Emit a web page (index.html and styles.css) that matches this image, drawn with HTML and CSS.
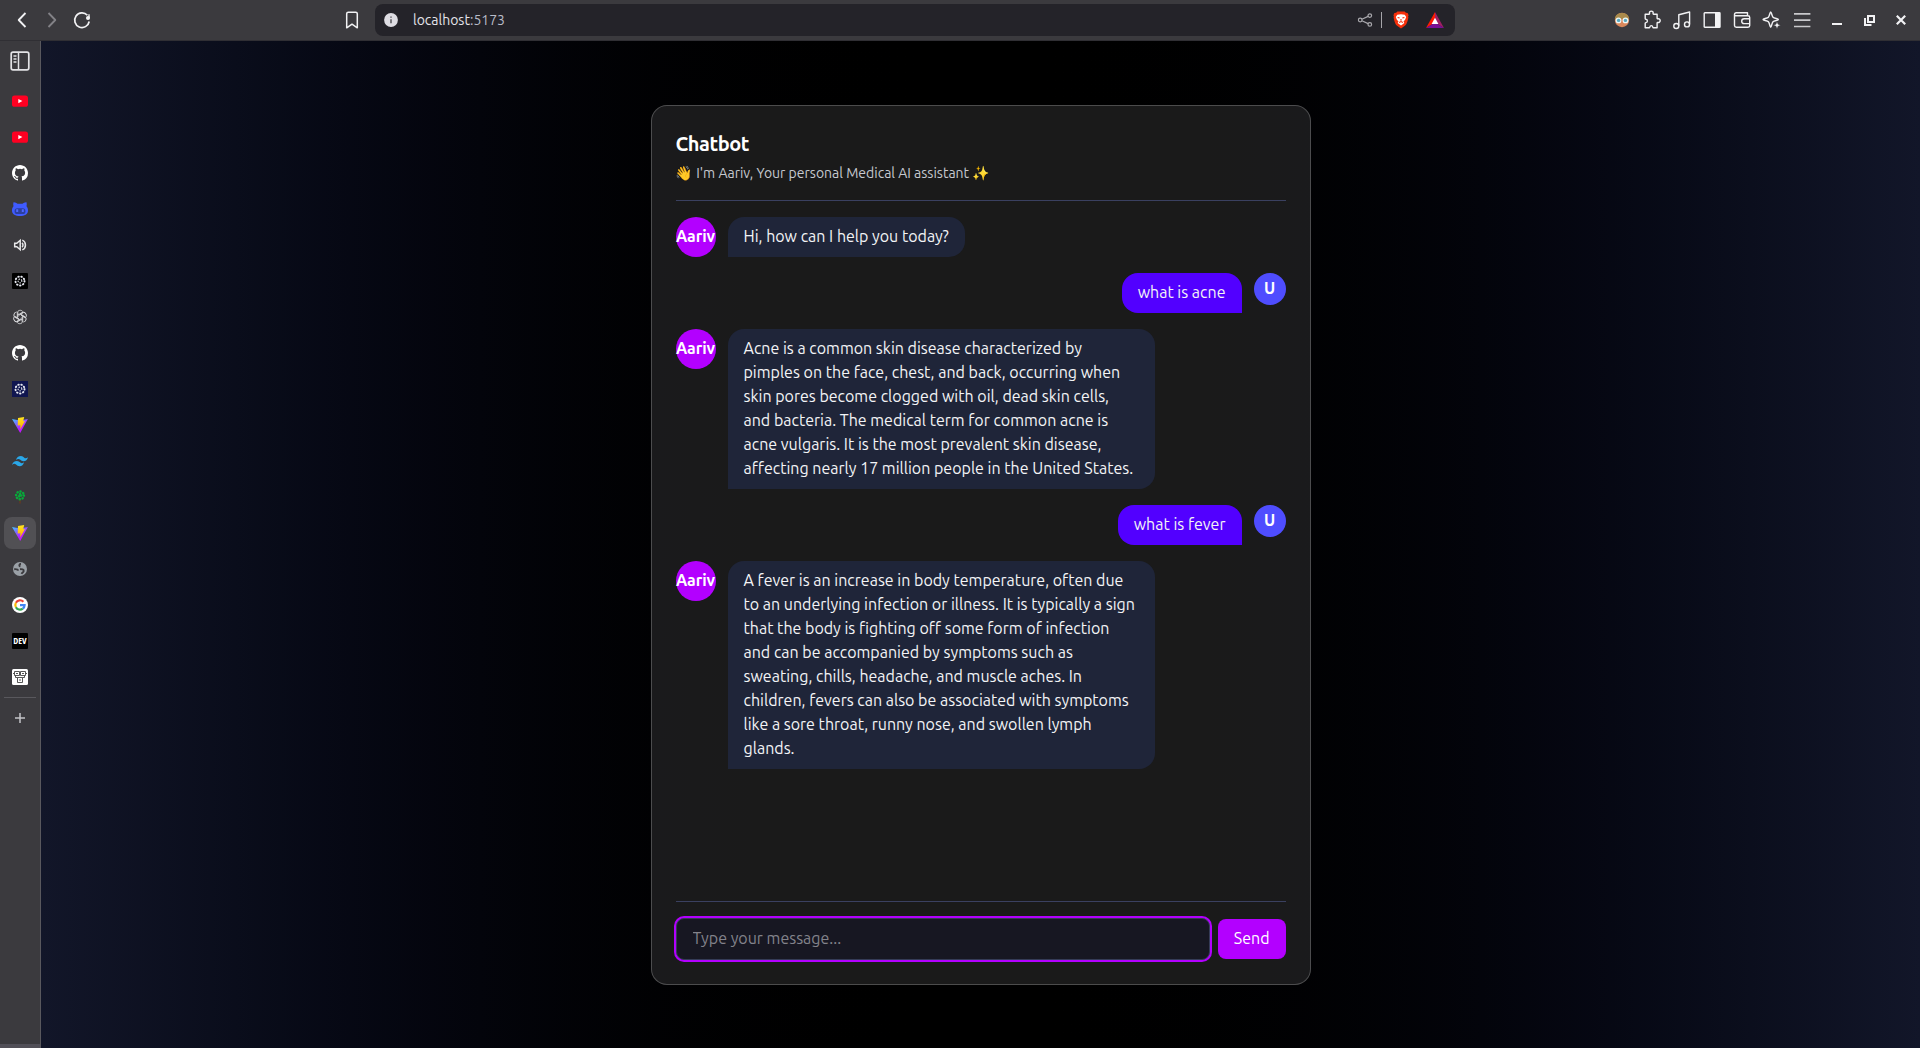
FILE: index.html
```html
<!DOCTYPE html>
<html lang="en">
<head>
<meta charset="utf-8">
<title>Chatbot</title>
<link rel="stylesheet" href="styles.css">
</head>
<body>
<svg class="defs" width="0" height="0" aria-hidden="true">
  <defs>
    <linearGradient id="vite-body" x1="0" y1="0" x2=".7" y2="1"><stop offset="0" stop-color="#41c4ff"/><stop offset=".45" stop-color="#8a5cff"/><stop offset=".7" stop-color="#b81cff"/><stop offset="1" stop-color="#c814fe"/></linearGradient>
    <linearGradient id="vite-bolt" x1="0" y1="0" x2="0" y2="1"><stop offset="0" stop-color="#ffe61f"/><stop offset="1" stop-color="#ffa800"/></linearGradient>
  </defs>
  <symbol id="youtube" viewBox="0 0 16 16"><rect y="2.4" width="16" height="11.4" rx="2.6" fill="#ff0022"/><path d="M6.3 5.9 10.4 8.1 6.3 10.3z" fill="#fff"/></symbol>
  <symbol id="github" viewBox="0 0 16 16"><path fill="#fff" d="M8 0C3.58 0 0 3.58 0 8c0 3.54 2.29 6.53 5.47 7.59.4.07.55-.17.55-.38 0-.19-.01-.82-.01-1.49-2.01.37-2.53-.49-2.69-.94-.09-.23-.48-.94-.82-1.13-.28-.15-.68-.52-.01-.53.63-.01 1.08.58 1.23.82.72 1.21 1.87.87 2.33.66.07-.52.28-.87.51-1.07-1.78-.2-3.64-.89-3.64-3.95 0-.87.31-1.59.82-2.15-.08-.2-.36-1.02.08-2.12 0 0 .67-.21 2.2.82a7.6 7.6 0 0 1 4 0c1.53-1.04 2.2-.82 2.2-.82.44 1.1.16 1.92.08 2.12.51.56.82 1.27.82 2.15 0 3.07-1.87 3.75-3.65 3.95.29.25.54.73.54 1.48 0 1.07-.01 1.93-.01 2.2 0 .21.15.46.55.38A8.01 8.01 0 0 0 16 8c0-4.42-3.58-8-8-8z"/></symbol>
  <symbol id="vite" viewBox="0 0 16 16"><path fill="url(#vite-body)" d="M0 2 8.200 16 15.900 2 8 3.400z"/><path fill="url(#vite-bolt)" d="M6 1 12.200 0 11.200 4.200 13 4 8.200 12.600 8.400 8.200 5.700 8.600z"/></symbol>
  <symbol id="molecule" viewBox="0 0 16 16"><g fill="none" stroke="#e4e6ee" stroke-width="1.900" stroke-linecap="round"><circle cx="8" cy="8" r="4.500" stroke-dasharray=".6 2.540"/><circle cx="8" cy="8" r="1.900" stroke-width="1.200" stroke-dasharray=".4 1.990"/></g></symbol>
</svg>

<div class="browser">
  <header class="toolbar">
    <div class="nav">
      <svg class="ico" viewBox="0 0 20 20"><path d="M13.5 3 6.7 10l6.8 7" stroke-width="1.8"/></svg>
      <svg class="ico dim" viewBox="0 0 20 20"><path d="M6.5 3l6.8 7-6.8 7" stroke-width="1.8"/></svg>
      <svg class="ico" viewBox="0 0 20 20"><path d="M15.4 5.3A7.3 7.3 0 1 0 17.2 11.5" stroke-width="1.7"/><circle cx="16" cy="8.1" r="2" fill="#f2f2f4" stroke="none"/><path d="M17 4.2v4"/></svg>
    </div>
    <svg class="ico bookmark" viewBox="0 0 20 20"><path d="M4.7 3.8c0-1 .6-1.6 1.6-1.6h7.4c1 0 1.6.6 1.6 1.6v14L10 14.2 4.7 17.8z" stroke-width="1.5"/></svg>
    <div class="address">
      <svg class="site-info" viewBox="0 0 14 14"><circle cx="7" cy="7" r="6.9" fill="#dedde3"/><path d="M7 6.3v4M7 3.4v1.3" stroke="#55545a" stroke-width="1.5"/></svg>
      <span class="url"><b>localhost</b>:5173</span>
      <svg class="share" viewBox="0 0 16 16"><g fill="none" stroke="#aaa9ae" stroke-width="1.2"><circle cx="3.2" cy="8" r="1.8"/><circle cx="12.8" cy="3.6" r="1.8"/><circle cx="12.8" cy="12.4" r="1.8"/><path d="M4.9 7.2l6.2-2.8M4.9 8.8l6.2 2.8"/></g></svg>
      <i class="divider"></i>
      <svg class="brave" viewBox="0 0 16 18"><path fill="#f6300b" d="M4.4.4h7.2l1.3 1.4 1.7.1 1 2.4-.5 1 .3 1.2c-1 5-2 7-3.5 8.3L8 17.6l-3.9-2.8C2.600 13.500 1.600 11.500.6 6.500l.3-1.2-.5-1 1-2.4 1.700-.1z"/><path fill="#fff" d="M4.300 3.800 8 3.200l3.700.6 1.500 2.100-1.200 3.100-1.500 1.200.8 1.700L8 14.500l-3.300-2.600.8-1.700L4 9 2.800 5.900z"/><path d="M4.600 6.400l2 .7M11.400 6.400l-2 .7M8 8v1.800M6.100 11.400 8 10.600l1.900.8" stroke="#f6300b" stroke-width="1.100" fill="none"/></svg>
      <svg class="bat" viewBox="0 0 18 16"><path d="M9 0 0 16 9 10.500z" fill="#ff1a00"/><path d="M9 0l9 16-9-5.500z" fill="#9e1f63"/><path d="M0 16h18l-9-5.500z" fill="#7a1095"/><path d="M9 5.800 12.400 12H5.600z" fill="#fff"/></svg>
    </div>
    <div class="extensions">
      <svg class="ico" viewBox="0 0 20 20"><g stroke="none"><circle cx="10" cy="10" r="7.200" fill="#d9885c"/><path d="M2.800 9C3 .9 17 .9 17.200 9z" fill="#a98a4c"/><circle cx="6.500" cy="10.400" r="2.900" fill="#eef8fb"/><circle cx="13.500" cy="10.400" r="2.900" fill="#eef8fb"/><circle cx="6.600" cy="10.400" r="1.700" fill="#57a9bf"/><circle cx="13.400" cy="10.400" r="1.700" fill="#57a9bf"/></g></svg>
      <svg class="ico" viewBox="0 0 20 20"><path d="M3.200 4.200H7c.5 0 .6-.4.500-.8-.4-1.400.5-2.300 1.800-2.300s2.200.9 1.800 2.300c-.1.400.1.800.6.800h3.400v4.100c0 .4.3.6.7.500 1.300-.3 2.400.5 2.400 1.800s-1.100 2.100-2.400 1.800c-.4-.1-.7.1-.7.500v4.800h-3.700c-.4 0-.5-.3-.6-.7-.2-.9-.7-1.400-1.500-1.400s-1.300.5-1.500 1.400c-.1.400-.2.700-.6.700H3.200v-4.400c0-.4.300-.6.700-.7 1-.2 1.500-.9 1.500-1.700s-.5-1.600-1.500-1.700c-.4-.1-.7-.3-.7-.8z"/></svg>
      <svg class="ico" viewBox="0 0 20 20"><path d="M6.800 15.800V4.800L17.600 2v12.300"/><circle cx="4.300" cy="16" r="2.500"/><circle cx="15" cy="14.400" r="2.500"/></svg>
      <svg class="ico" viewBox="0 0 20 20"><rect x="2.200" y="2.700" width="15.800" height="14.600" rx=".6"/><path d="M13 3h5v14h-5z" fill="#f2f2f4" stroke="none"/></svg>
      <svg class="ico" viewBox="0 0 20 20"><path d="M2.500 4.500c0-1 .8-1.800 1.800-1.800h11.200v3.100M3 5.800h13c1 0 1.700.7 1.700 1.700v8c0 1-.7 1.700-1.700 1.700H4.300c-1 0-1.800-.7-1.800-1.700v-11c0 .8.300 1.300 1.300 1.300M17.700 8.800h-5.500c-1.500 0-2.500 1-2.500 2.400s1 2.400 2.500 2.400h5.500"/></svg>
      <svg class="ico" viewBox="0 0 20 20"><path d="M8.700 1.900c.8 0 1.100 4.100 2.300 5.300s5.400 1.500 5.400 2.300-4.200 1.100-5.400 2.300-1.500 5.400-2.300 5.400-1.100-4.200-2.300-5.400S1 10.300 1 9.500s4.200-1.100 5.400-2.300 1.500-5.300 2.300-5.300z"/><path d="M15 11.700l1 2.500 2.500 1-2.500 1-1 2.500-1-2.500-2.500-1 2.500-1z" fill="#f2f2f4" stroke="#3b3a3e" stroke-width=".4"/></svg>
      <svg class="ico menu" viewBox="0 0 20 20"><path d="M2 3.800h16.400M2 10.200h16.400M2 16.500h16.400" stroke-width="1.700"/></svg>
    </div>
    <div class="window-controls">
      <svg viewBox="0 0 12 12"><path d="M1 10h10" stroke-width="2"/></svg>
      <svg viewBox="0 0 12 12"><path d="M5 2h6v6H5zM2 4v7h6.500" stroke-width="2"/></svg>
      <svg viewBox="0 0 12 12"><path d="M1.800 1.800l8.400 8.400M10.200 1.800l-8.400 8.400" stroke-width="2.200"/></svg>
    </div>
  </header>

  <div class="workspace">
    <aside class="tabs">
      <div class="panel-toggle"><svg viewBox="0 0 20 20"><rect x="1.200" y="1.200" width="17.600" height="17.600" rx="1.800" stroke-width="1.700"/><path d="M8.500 1v18" stroke-width="1.500"/><path d="M3.500 5h3M3.500 8h3M3.500 11h3" stroke-width="1.500"/></svg></div>
      <div class="tab"><svg><use href="#youtube"/></svg></div>
      <div class="tab"><svg><use href="#youtube"/></svg></div>
      <div class="tab"><svg><use href="#github"/></svg></div>
      <div class="tab"><svg viewBox="0 0 16 16"><path fill="#3f5bff" d="M1.500 1.200C3 1 4.500 1.800 5.500 2.700h5c1-.9 2.500-1.700 4-1.500.4 1.500.4 2.800 0 4 1.100 1.200 1.500 2.400 1.500 4.300 0 4-3.500 5.500-8 5.500S0 13.500 0 9.500c0-1.900.4-3.100 1.500-4.300-.4-1.200-.4-2.500 0-4z"/><rect x="2.600" y="7.200" width="10.800" height="5.800" rx="2.600" fill="#2c3f9e"/><path d="M5.200 8.300v2.700M10.800 8.300v2.700" stroke="#4f68ff" stroke-width="2"/></svg></div>
      <div class="tab"><svg viewBox="0 0 16 16"><g fill="none" stroke="#e8e8ea" stroke-width="1.500"><path d="M2.700 6.300h2.100L8.200 3.300v9.400L4.800 9.700H2.700z"/><path d="M10 5.800c1.300 1 1.300 3.400 0 4.400M10.300 3.100c4.200 1.700 4.200 8.100 0 9.800"/></g></svg></div>
      <div class="tab"><svg viewBox="0 0 16 16"><rect width="16" height="16" rx="1" fill="#000"/><use href="#molecule"/></svg></div>
      <div class="tab"><svg viewBox="0 0 16 16"><g fill="none" stroke="#dcdcdf" stroke-width=".9"><path id="petal" d="M5.300 8.900V4.200C5.300 1 9.500.400 10.900 2.700M7 6.200l3.900-2.200"/><use href="#petal" transform="rotate(60 8 8)"/><use href="#petal" transform="rotate(120 8 8)"/><use href="#petal" transform="rotate(180 8 8)"/><use href="#petal" transform="rotate(240 8 8)"/><use href="#petal" transform="rotate(300 8 8)"/></g></svg></div>
      <div class="tab"><svg><use href="#github"/></svg></div>
      <div class="tab"><svg viewBox="0 0 16 16"><rect width="16" height="16" fill="#101650"/><use href="#molecule"/></svg></div>
      <div class="tab"><svg><use href="#vite"/></svg></div>
      <div class="tab"><svg viewBox="0 0 16 16"><path fill="#2aa7e8" d="M4 7q1-4 5-4 2 0 3.300 1.700Q13.600 6 16 4.300q-1 3.900-4.500 3.900Q9.500 8.200 8 6.600T4 7zM0 11.900Q1 8 5 8q2 0 3.300 1.600T12 9.200q-1 4-4.500 4-2 0-3.500-1.600T0 11.900z"/></svg></div>
      <div class="tab"><svg viewBox="0 0 16 16"><path d="M8 9v5.500" stroke="#6b3a20" stroke-width="1.300"/><g fill="none" stroke="#08a83a" stroke-width="2.500" stroke-linecap="round"><circle cx="8" cy="6.400" r="3.900" stroke-dasharray=".2 2.860"/><circle cx="8" cy="6.400" r="1.300" stroke-dasharray=".2 2.500"/></g></svg></div>
      <div class="tab active"><svg><use href="#vite"/></svg></div>
      <div class="tab"><svg viewBox="0 0 16 16"><circle cx="8" cy="8" r="7" fill="#9aa0a6"/><path d="M9 2.800C6.800 3 6.900 5 8.400 5.500M8 8.200c1.800-.2 4 .2 3.700 1.900-.2 1.300-1.500 1.200-2.200 2.700M2.200 8.200c2.300-.2 3.700.3 3.900 1.500" fill="none" stroke="#3b3a3e" stroke-width="1.900"/></svg></div>
      <div class="tab"><svg viewBox="0 0 16 16"><circle cx="8" cy="8" r="8" fill="#fff"/><g fill="none" stroke-width="2.200"><path stroke="#ea4335" d="M3.900 5.700A4.600 4.600 0 0 1 11.400 4.800"/><path stroke="#fbbc05" d="M3.900 10.200a4.600 4.600 0 0 1 0-4.500"/><path stroke="#34a853" d="M3.900 10.200a4.600 4.600 0 0 0 6.900 1.400"/><path stroke="#4285f4" d="M8 8.100h4.600a4.600 4.600 0 0 1-1.800 3.500"/></g></svg></div>
      <div class="tab"><span class="dev">DEV</span></div>
      <div class="tab"><svg viewBox="0 0 16 16"><rect width="16" height="16" rx="1.500" fill="#fff"/><g fill="none" stroke="#444" stroke-width=".9"><path d="M2.500 2.500h5v4h-5zM8.500 2.500h5v4h-5zM5.500 8.500h5v5h-5zM1 4.500h1.500M13.500 4.500H15M4 4.500h2M10 4.500h2M7 11h2M3.500 6.500v2h2M12.500 6.500v2h-2"/></g></svg></div>
      <hr class="tab-rule">
      <div class="new-tab"><svg viewBox="0 0 12 12"><path d="M6 1v10M1 6h10" stroke="#c4c4c7" stroke-width="1.500"/></svg></div>
      <div class="tab-footer"></div>
    </aside>

    <main class="page">
      <section class="card">
        <header class="card-head">
          <h1>Chatbot</h1>
          <p>👋 I'm Aariv, Your personal Medical AI assistant ✨</p>
        </header>
        <div class="messages">
          <div class="row"><div class="avatar bot">Aariv</div><p class="bubble">Hi, how can I help you today?</p></div>
          <div class="row mine"><p class="bubble">what is acne</p><div class="avatar">U</div></div>
          <div class="row"><div class="avatar bot">Aariv</div><p class="bubble">Acne is a common skin disease characterized by pimples on the face, chest, and back, occurring when skin pores become clogged with oil, dead skin cells, and bacteria. The medical term for common acne is acne vulgaris. It is the most prevalent skin disease, affecting nearly 17 million people in the United States.</p></div>
          <div class="row mine"><p class="bubble">what is fever</p><div class="avatar">U</div></div>
          <div class="row"><div class="avatar bot">Aariv</div><p class="bubble">A fever is an increase in body temperature, often due to an underlying infection or illness. It is typically a sign that the body is fighting off some form of infection and can be accompanied by symptoms such as sweating, chills, headache, and muscle aches. In children, fevers can also be associated with symptoms like a sore throat, runny nose, and swollen lymph glands.</p></div>
        </div>
        <form class="composer">
          <input type="text" placeholder="Type your message...">
          <button type="button">Send</button>
        </form>
      </section>
    </main>
  </div>
</div>
</body>
</html>
```
FILE: styles.css
```css
* { box-sizing: border-box; margin: 0; }

body {
  height: 100vh;
  overflow: hidden;
  font: 16px/24px Ubuntu, "Noto Sans", "Noto Color Emoji", sans-serif;
  color: #f3f4f6;
  background: #3b3a3e;
}

svg { display: block; fill: none; }
.defs { position: absolute; }

.browser { height: 100vh; display: flex; flex-direction: column; }

/* Browser toolbar */
.toolbar {
  height: 41px;
  flex: none;
  display: flex;
  align-items: center;
  padding: 0 13px 1px 12px;
  background: #3b3a3e;
  border-bottom: 1px solid #302f34;
}
.ico { width: 20px; height: 20px; stroke: #f2f2f4; stroke-width: 1.4; stroke-linejoin: round; }
.ico.dim { stroke: #838287; }
.ico.menu { stroke: #c9c9cc; }
.nav { display: flex; gap: 10px; }
.bookmark { margin-left: 250px; }
.address {
  width: 1080px;
  height: 32px;
  margin-left: 13px;
  padding: 0 11px 0 9px;
  display: flex;
  align-items: center;
  background: #242329;
  border-radius: 8px;
}
.site-info { width: 14px; height: 14px; }
.url { margin-left: 15px; flex: 1; font-size: 14px; color: #b9bcc8; }
.url b { font-weight: 400; color: #e4e4ea; }
.share { width: 16px; height: 16px; }
.divider { width: 1px; height: 16px; margin: 0 11px 0 8px; background: #a5a4a9; }
.brave { width: 16px; height: 18px; }
.bat { width: 18px; height: 16px; margin-left: 17px; }
.extensions { display: flex; gap: 10px; margin-left: 157px; }
.window-controls { display: flex; gap: 20px; margin-left: auto; }
.window-controls svg { width: 12px; height: 12px; stroke: #f2f2f4; }

/* Vertical tab strip */
.workspace { flex: 1; min-height: 0; display: flex; }
.tabs {
  width: 41px;
  flex: none;
  display: flex;
  flex-direction: column;
  align-items: center;
  background: #3b3a3e;
  border-right: 1px solid #59585d;
}
.panel-toggle { height: 42px; padding-top: 10px; }
.panel-toggle svg { width: 20px; height: 20px; stroke: #e3e3e6; }
.tab {
  width: 32px;
  height: 32px;
  margin: 2px 0;
  display: grid;
  place-items: center;
  border-radius: 8px;
}
.tab svg { width: 16px; height: 16px; }
.tab.active { background: #515054; }
.dev {
  width: 16px;
  height: 16px;
  background: #000;
  color: #fff;
  border-radius: 1px;
  font: 700 9px/16px "Open Sans", sans-serif;
  font-stretch: 75%;
  text-align: center;
}
.tab-rule { width: 32px; height: 1px; border: 0; margin-top: 2px; background: #59585d; }
.new-tab { height: 40px; display: grid; place-items: center; }
.new-tab svg { width: 12px; height: 12px; }
.tab-footer { width: 100%; height: 4px; margin-top: auto; background: #514f57; }

/* Page and chat card */
.page {
  flex: 1;
  display: grid;
  place-items: center;
  background: linear-gradient(to right in oklab, #121629, #000, #121629);
}
.card {
  width: 660px;
  height: 880px;
  padding: 24px;
  display: flex;
  flex-direction: column;
  background: rgba(255, 255, 255, .1);
  border: 1px solid rgba(255, 255, 255, .22);
  border-radius: 16px;
}
.card-head { padding-bottom: 16px; border-bottom: 1px solid #3a4060; }
.card-head h1 { font-size: 20px; line-height: 28px; font-weight: 700; letter-spacing: -.45px; color: #fff; }
.card-head p { margin-top: 4px; font-size: 14px; line-height: 22px; color: #c6c9d0; }

.messages { flex: 1; padding-top: 16px; display: flex; flex-direction: column; gap: 16px; }
.row { display: flex; align-items: flex-start; gap: 12px; }
.row.mine { justify-content: flex-end; }
.avatar {
  width: 32px;
  height: 32px;
  padding-bottom: 2px;
  flex: none;
  display: flex;
  align-items: center;
  justify-content: center;
  border-radius: 50%;
  background: #4f4dff;
  color: #fff;
  font-weight: 700;
}
.avatar.bot { width: 40px; height: 40px; background: #b300ff; }
.bubble {
  max-width: 70%;
  padding: 7px 16px 9px;
  background: #1f2539;
  border-radius: 16px 16px 16px 0;
}
.mine .bubble { background: #5200ff; border-radius: 16px 16px 0 16px; }

.composer {
  padding-top: 16px;
  display: flex;
  align-items: center;
  gap: 8px;
  border-top: 1px solid #3a4060;
}
.composer input {
  flex: 1;
  height: 42px;
  padding: 0 16px 2px;
  font: inherit;
  color: #fff;
  background: #171722;
  border: 1px solid #353c57;
  border-radius: 8px;
  outline: 0;
  box-shadow: 0 0 0 2px #b300ff;
}
.composer input::placeholder { color: #83838b; }
.composer button {
  height: 40px;
  padding: 0 16px 2px;
  font: inherit;
  color: #fff;
  background: #b300ff;
  border: 0;
  border-radius: 8px;
}
```
